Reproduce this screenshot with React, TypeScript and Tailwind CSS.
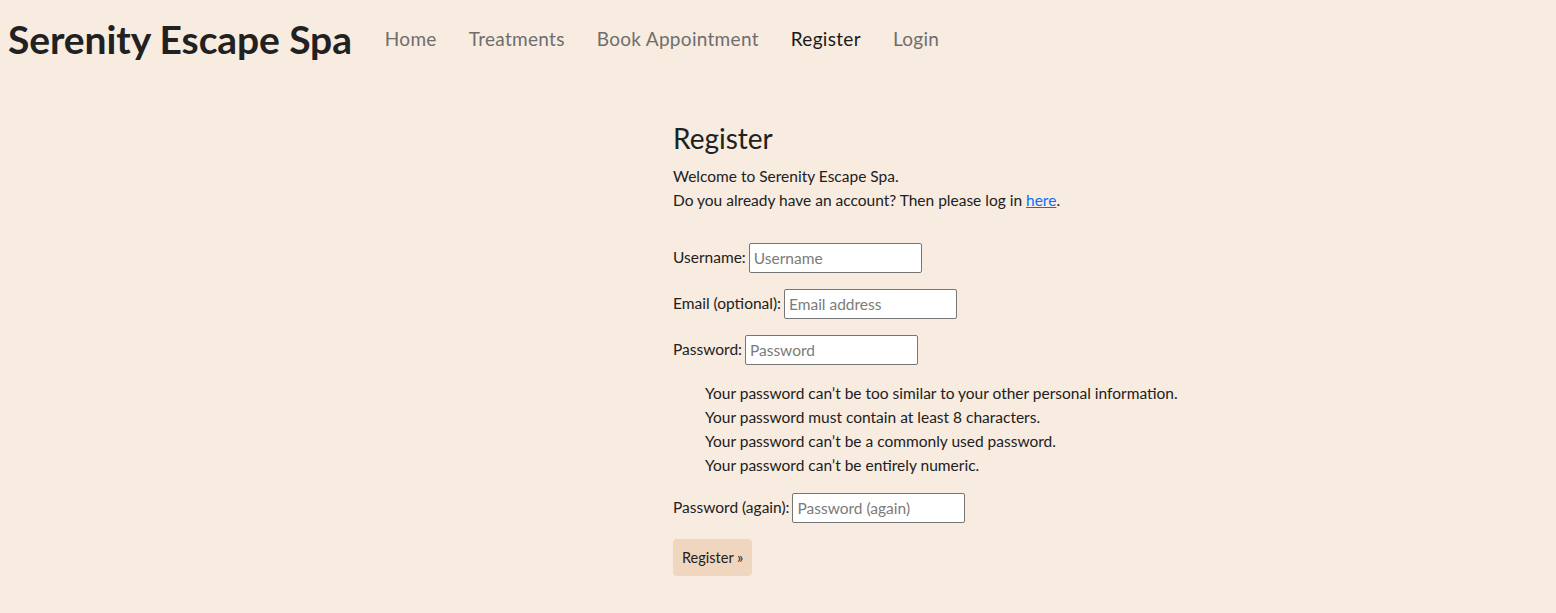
const navItems = [
  { label: "Home", active: false },
  { label: "Treatments", active: false },
  { label: "Book Appointment", active: false },
  { label: "Register", active: true },
  { label: "Login", active: false },
];

const helpTexts = [
  "Your password can’t be too similar to your other personal information.",
  "Your password must contain at least 8 characters.",
  "Your password can’t be a commonly used password.",
  "Your password can’t be entirely numeric.",
];

function Field({ label, placeholder, type = "text" }: { label: string; placeholder: string; type?: string }) {
  return (
    <p className="flex items-center h-[30px]">
      <label className="mr-[3px]">{label}</label>
      <input
        type={type}
        placeholder={placeholder}
        className="w-[173px] h-[30px] px-[4px] bg-white border border-[#767676] rounded-[2px] text-[15.5px] placeholder:text-[#7b7b7b] outline-none"
      />
    </p>
  );
}

export default function App() {
  return (
    <div className="min-h-[613px] bg-[#f8ebe0] text-[#212121] font-['Lato',sans-serif]">
      <header className="flex items-center h-[80px] pl-[8px]">
        <h1 className="text-[39px] font-bold tracking-[-0.1px] mr-[17px] pb-[2px]">Serenity Escape Spa</h1>
        <nav className="flex items-center pb-[2px]">
          {navItems.map((item) => (
            <a
              key={item.label}
              href="#"
              className={`px-[16px] text-[19px] tracking-[0.3px] ${item.active ? "text-[#1a1a1a]" : "text-[#6e6e6e]"}`}
            >
              {item.label}
            </a>
          ))}
        </nav>
      </header>

      <main className="pl-[673px] pt-[40px] text-[15.5px]">
        <h2 className="text-[28px] leading-[36px] mb-[8px]">Register</h2>
        <p className="leading-[24px]">Welcome to Serenity Escape Spa.</p>
        <p className="leading-[24px]">
          Do you already have an account? Then please log in{" "}
          <a href="#" className="text-[#0d6efd] underline">here</a>.
        </p>

        <form className="mt-[31px] flex flex-col gap-[16px]">
          <Field label="Username:" placeholder="Username" />
          <Field label="Email (optional):" placeholder="Email address" type="email" />
          <Field label="Password:" placeholder="Password" type="password" />
          <ul className="pl-[32px] leading-[24px]">
            {helpTexts.map((t) => (
              <li key={t}>{t}</li>
            ))}
          </ul>
          <Field label="Password (again):" placeholder="Password (again)" type="password" />
          <div>
            <button type="button" className="h-[37px] px-[9px] bg-[#f1d6bf] rounded-[4px] text-[14.5px]">
              Register »
            </button>
          </div>
        </form>
      </main>
    </div>
  );
}
